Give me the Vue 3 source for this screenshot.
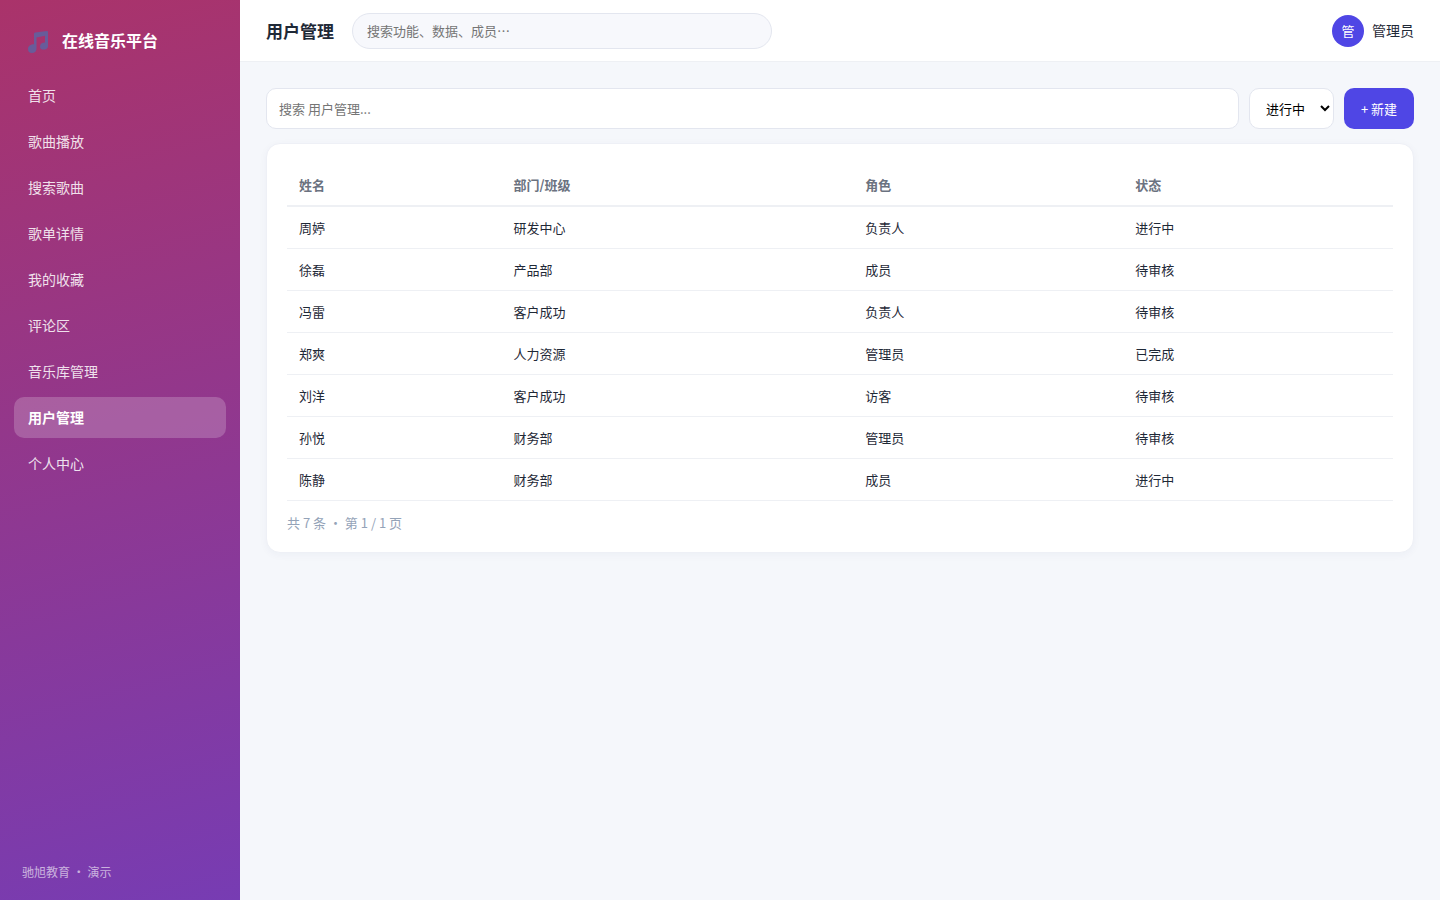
<script setup>
import { ref } from 'vue'

const navItems = ['首页', '歌曲播放', '搜索歌曲', '歌单详情', '我的收藏', '评论区', '音乐库管理', '用户管理', '个人中心']
const active = ref('用户管理')
const globalQuery = ref('')
const query = ref('')
const status = ref('进行中')
const statuses = ['进行中', '待审核', '已完成']
const columns = ['姓名', '部门/班级', '角色', '状态']
const rows = [
  ['周婷', '研发中心', '负责人', '进行中'],
  ['徐磊', '产品部', '成员', '待审核'],
  ['冯雷', '客户成功', '负责人', '待审核'],
  ['郑爽', '人力资源', '管理员', '已完成'],
  ['刘洋', '客户成功', '访客', '待审核'],
  ['孙悦', '财务部', '管理员', '待审核'],
  ['陈静', '财务部', '成员', '进行中'],
]
</script>

<template>
  <div class="layout">
    <aside class="sidebar">
      <div class="brand">
        <svg class="logo" viewBox="0 0 22 24" aria-hidden="true">
          <path d="M7 3.5 Q7 2.6 8 2.4 L20 1 Q21 1 21 2 V16.500 C21 18.500 19 19.600 16.500 19.600 C14 19.600 13 18.600 13 16.500 C13 14 15 12.600 18 12.600 V5.800 L9.500 7.400 V18.500 C9.500 21.500 7.500 23 4.800 23 C2.400 23 1 21.500 1 19 C1 16 3.500 14.200 7 14.200 Z" />
        </svg>
        <span>在线音乐平台</span>
      </div>
      <nav class="nav">
        <a
          v-for="item in navItems"
          :key="item"
          href="#"
          :class="{ active: item === active }"
          @click.prevent="active = item"
        >{{ item }}</a>
      </nav>
      <div class="copyright">驰旭教育 · 演示</div>
    </aside>

    <div class="content">
      <header class="topbar">
        <h1>用户管理</h1>
        <input v-model="globalQuery" class="global-search" type="text" aria-label="全局搜索" placeholder="搜索功能、数据、成员…" />
        <div class="user">
          <span class="avatar">管</span>
          <span>管理员</span>
        </div>
      </header>

      <main class="page">
        <div class="toolbar">
          <input v-model="query" class="filter" type="text" aria-label="搜索用户" placeholder="搜索 用户管理..." />
          <select v-model="status" class="status" aria-label="状态">
            <option v-for="s in statuses" :key="s">{{ s }}</option>
          </select>
          <button class="create" type="button">+ 新建</button>
        </div>

        <section class="card">
          <table>
            <colgroup>
              <col class="col-name" />
              <col class="col-dept" />
              <col class="col-role" />
              <col class="col-status" />
            </colgroup>
            <thead>
              <tr>
                <th v-for="c in columns" :key="c" scope="col">{{ c }}</th>
              </tr>
            </thead>
            <tbody>
              <tr v-for="row in rows" :key="row[0]">
                <td v-for="(cell, i) in row" :key="i">{{ cell }}</td>
              </tr>
            </tbody>
          </table>
          <div class="pager">共 7 条 · 第 1 / 1 页</div>
        </section>
      </main>
    </div>
  </div>
</template>

<style>
body {
  margin: 0;
  background: #f5f7fb;
}
</style>

<style scoped>
.layout,
.layout * {
  box-sizing: border-box;
}

.layout {
  display: flex;
  min-height: 100vh;
  font-family: "Noto Sans CJK SC", sans-serif;
  font-size: 14px;
  line-height: 21px;
  color: #1f2937;
}

.layout input,
.layout select,
.layout button {
  font-family: inherit;
  font-size: 13px;
}

.sidebar {
  display: flex;
  flex-direction: column;
  flex: none;
  width: 240px;
  padding: 22px 14px 18px;
  background: linear-gradient(165deg, #aa336a, #773cb3);
  color: #fff;
}

.brand {
  display: flex;
  align-items: center;
  gap: 12px;
  height: 36px;
  padding: 0 12px;
  margin-bottom: 17px;
  font-size: 16px;
  font-weight: 700;
}

.logo {
  width: 24px;
  height: 24px;
  margin-top: 4px;
  fill: #685c9a;
}

.nav {
  display: flex;
  flex-direction: column;
  flex: 1;
  gap: 5px;
}

.nav a {
  padding: 10px 14px;
  border-radius: 10px;
  color: #fff;
  opacity: 0.85;
  text-decoration: none;
}

.nav a.active {
  background: rgba(255, 255, 255, 0.2);
  font-weight: 700;
  opacity: 1;
}

.copyright {
  padding: 0 8px;
  font-size: 12px;
  opacity: 0.6;
}

.content {
  flex: 1;
  min-width: 0;
}

.topbar {
  display: flex;
  align-items: center;
  gap: 18px;
  height: 62px;
  padding: 0 26px;
  background: #fff;
  border-bottom: 1px solid #eef0f4;
}

.topbar h1 {
  margin: 0;
  font-size: 17px;
  font-weight: 700;
}

.global-search {
  width: 420px;
  height: 36px;
  padding: 0 14px;
  border: 1px solid #e3e6ef;
  border-radius: 18px;
  background: #f7f8fc;
}

.user {
  display: flex;
  align-items: center;
  gap: 8px;
  margin-left: auto;
}

.avatar {
  display: grid;
  place-items: center;
  width: 32px;
  height: 32px;
  border-radius: 50%;
  background: #4f46e5;
  color: #fff;
  font-size: 13px;
}

.page {
  padding: 26px;
}

.toolbar {
  display: flex;
  gap: 10px;
  height: 41px;
  margin-bottom: 14px;
}

.filter,
.status {
  border: 1px solid #e3e6ef;
  border-radius: 10px;
  background: #fff;
}

.filter {
  flex: 1;
  min-width: 0;
  padding: 0 12px;
}

.status {
  width: 85px;
  padding: 0 0 0 12px;
  color: #000;
}

.create {
  width: 70px;
  padding: 0;
  border: 0;
  border-radius: 10px;
  background: #4f46e5;
  color: #fff;
}

.card {
  padding: 20px;
  border: 1px solid #eef0f6;
  border-radius: 14px;
  background: #fff;
  box-shadow: 0 2px 8px rgba(30, 41, 90, 0.04);
}

table {
  width: 100%;
  border-collapse: separate;
  border-spacing: 0;
  table-layout: fixed;
  font-size: 13px;
}

.col-name {
  width: 19.4%;
}

.col-dept {
  width: 31.8%;
}

.col-role {
  width: 24.4%;
}

th,
td {
  padding: 10px 12px;
  text-align: left;
  border-bottom: 1px solid #eef0f4;
}

th {
  border-bottom-width: 2px;
  color: #6b7280;
  font-weight: 700;
}

.pager {
  margin-top: 12px;
  font-size: 13px;
  line-height: 19px;
  color: #94a3b8;
}
</style>
